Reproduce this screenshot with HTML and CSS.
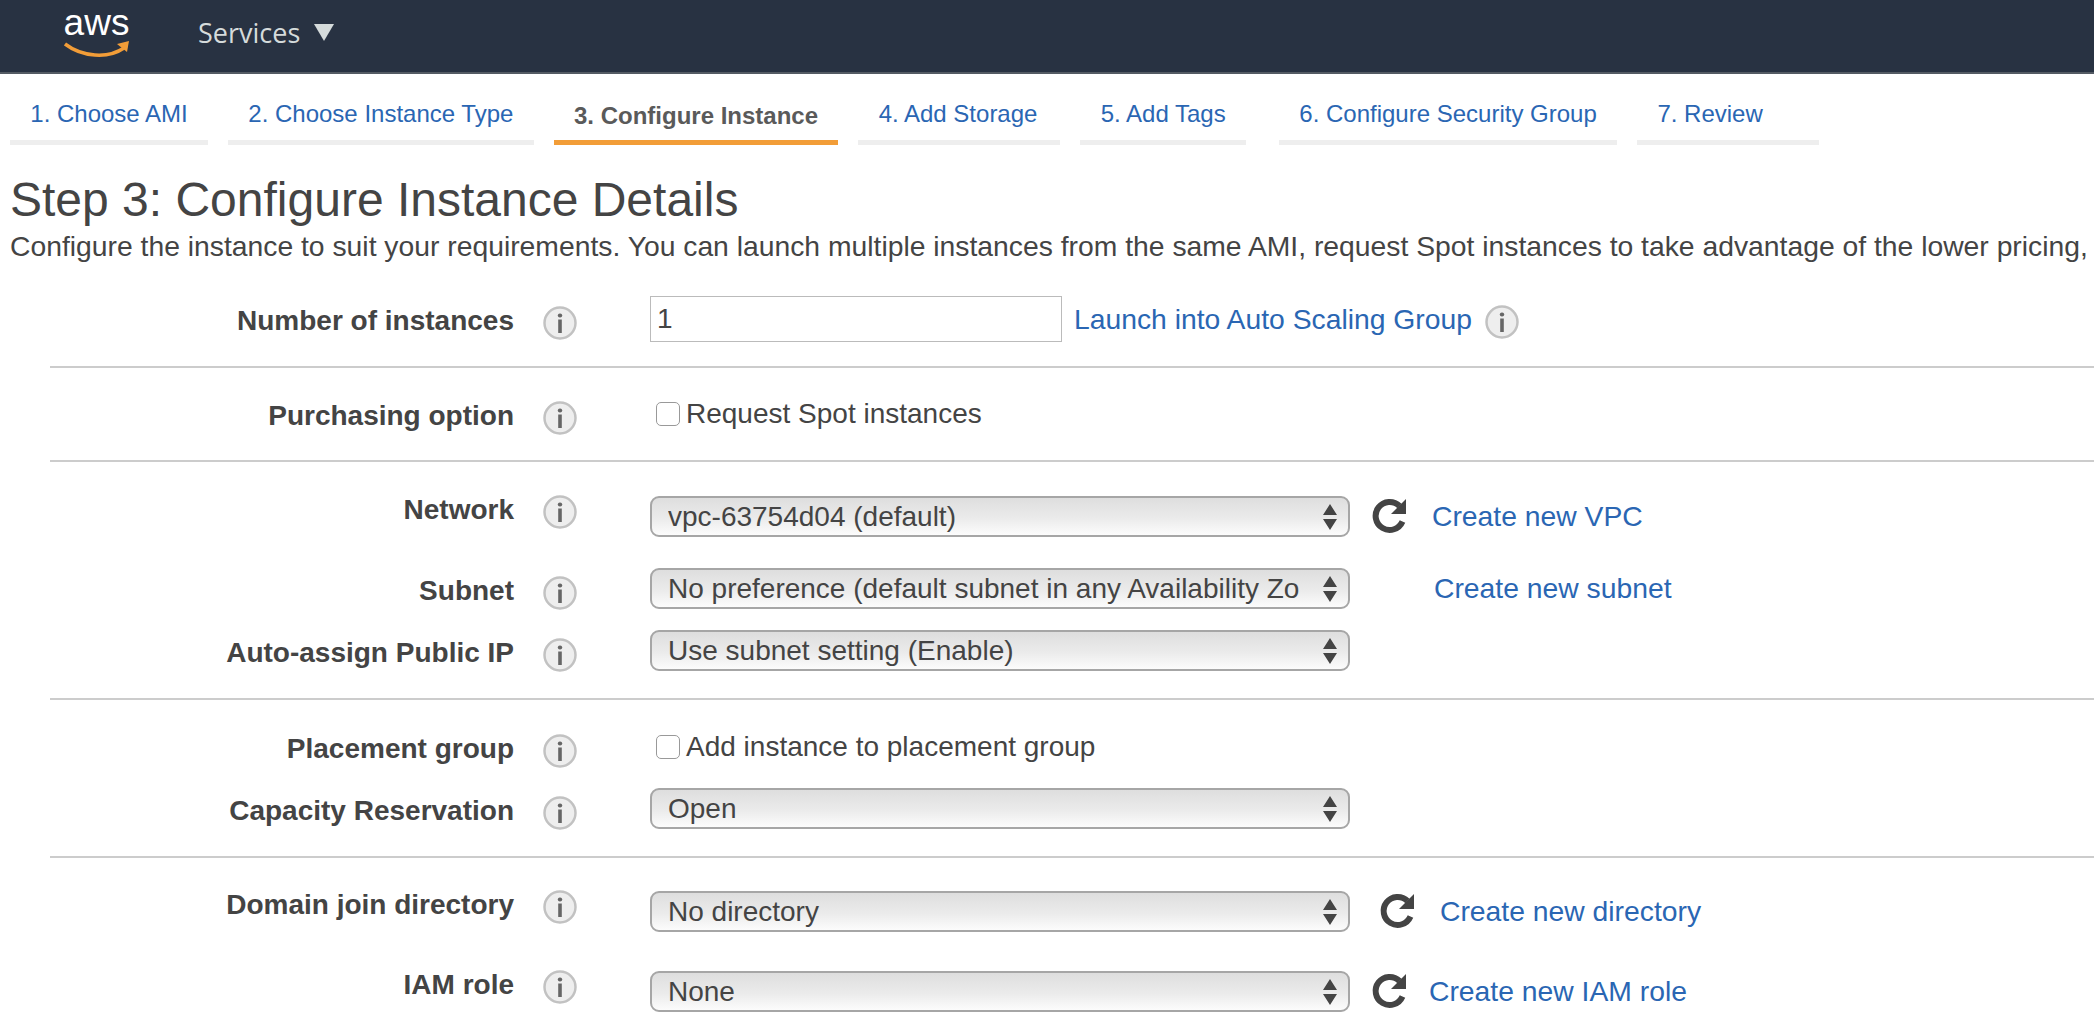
FILE: index.html
```html
<html>
<head>
	<title>Launch instance wizard</title>
	<meta charset="UTF-8">
	<link rel="stylesheet" href="styles.css">
</head>
<body>
	<svg class="defs" width="0" height="0">
		<symbol id="info" viewBox="0 0 36 36">
			<circle cx="18" cy="18" r="15.5" fill="#eeeeee" stroke="#c2c2c2" stroke-width="2.5"/>
			<rect x="15.8" y="8.5" width="4.4" height="4" rx="2" fill="#666"/>
			<rect x="16.2" y="14.5" width="3.6" height="13.5" fill="#666"/>
		</symbol>
		<symbol id="refresh" viewBox="0 0 38 38">
			<path d="M31.5 24.5A14 14 0 1 1 28.5 9" fill="none" stroke="#444" stroke-width="6"/>
			<path d="M35 2V17H20Z" fill="#444"/>
		</symbol>
		<symbol id="arrows" viewBox="0 0 16 28">
			<path d="M8 1L15 12H1ZM1 16H15L8 27Z" fill="#444"/>
		</symbol>
	</svg>

	<header class="topbar">
		<div class="logo">
			<span class="logo-text">aws</span>
			<svg class="smile" viewBox="0 0 66 20" width="66" height="20">
				<path d="M1 4C18 17 44 19 60 8" fill="none" stroke="#f29d38" stroke-width="3.5"/>
				<path d="M53 4L65 1L63 12Z" fill="#f29d38"/>
			</svg>
		</div>
		<span class="services">Services</span>
		<span class="caret"></span>
	</header>

	<nav class="tabs">
		<a class="tab">1. Choose AMI</a>
		<a class="tab">2. Choose Instance Type</a>
		<a class="tab active">3. Configure Instance</a>
		<a class="tab storage">4. Add Storage</a>
		<a class="tab">5. Add Tags</a>
		<a class="tab security">6. Configure Security Group</a>
		<a class="tab review">7. Review</a>
	</nav>

	<h1>Step 3: Configure Instance Details</h1>
	<p class="intro">Configure the instance to suit your requirements. You can launch multiple instances from the same AMI, request Spot instances to take advantage of the lower pricing,</p>

	<form>
		<section class="group first">
			<div class="row">
				<div class="head"><label>Number of instances</label><svg class="info"><use href="#info"/></svg></div>
				<input class="count" type="text" value="1">
				<a class="link launch">Launch into Auto Scaling Group</a>
				<svg class="info after-link"><use href="#info"/></svg>
			</div>
		</section>

		<section class="group second">
			<div class="row tall">
				<div class="head"><label>Purchasing option</label><svg class="info"><use href="#info"/></svg></div>
				<input class="check" type="checkbox"><span class="check-text">Request Spot instances</span>
			</div>
		</section>

		<section class="group third">
			<div class="row">
				<div class="head raised"><label>Network</label><svg class="info"><use href="#info"/></svg></div>
				<div class="select-box"><select><option>vpc-63754d04 (default)</option></select><svg class="arrows"><use href="#arrows"/></svg></div>
				<svg class="refresh"><use href="#refresh"/></svg>
				<a class="link vpc">Create new VPC</a>
			</div>
			<div class="row subnet">
				<div class="head"><label>Subnet</label><svg class="info"><use href="#info"/></svg></div>
				<div class="select-box"><select><option>No preference (default subnet in any Availability Zone)</option></select><svg class="arrows"><use href="#arrows"/></svg></div>
				<a class="link new-subnet">Create new subnet</a>
			</div>
			<div class="row public-ip">
				<div class="head"><label>Auto-assign Public IP</label><svg class="info"><use href="#info"/></svg></div>
				<div class="select-box"><select><option>Use subnet setting (Enable)</option></select><svg class="arrows"><use href="#arrows"/></svg></div>
			</div>
		</section>

		<section class="group fourth">
			<div class="row tall">
				<div class="head"><label>Placement group</label><svg class="info"><use href="#info"/></svg></div>
				<input class="check" type="checkbox"><span class="check-text">Add instance to placement group</span>
			</div>
			<div class="row capacity">
				<div class="head"><label>Capacity Reservation</label><svg class="info"><use href="#info"/></svg></div>
				<div class="select-box"><select><option>Open</option></select><svg class="arrows"><use href="#arrows"/></svg></div>
			</div>
		</section>

		<section class="group last">
			<div class="row">
				<div class="head raised"><label>Domain join directory</label><svg class="info"><use href="#info"/></svg></div>
				<div class="select-box"><select><option>No directory</option></select><svg class="arrows"><use href="#arrows"/></svg></div>
				<svg class="refresh directory"><use href="#refresh"/></svg>
				<a class="link vpc">Create new directory</a>
			</div>
			<div class="row iam">
				<div class="head raised"><label>IAM role</label><svg class="info"><use href="#info"/></svg></div>
				<div class="select-box"><select><option>None</option></select><svg class="arrows"><use href="#arrows"/></svg></div>
				<svg class="refresh"><use href="#refresh"/></svg>
				<a class="link role">Create new IAM role</a>
			</div>
		</section>
	</form>
</body>
</html>
```

FILE: styles.css
```css
*{
	margin: 0;
	padding: 0;
	box-sizing: border-box;
}
html,body{
	height: 100%;
	overflow: hidden;
}
body{
	background: #fff;
	color: #444;
	font-family: "Liberation Sans", Arial, sans-serif;
	font-size: 28px;
}
.defs{
	display: block;
	height: 0;
}

/* top bar */
.topbar{
	display: flex;
	align-items: center;
	height: 74px;
	padding-left: 63px;
	background: #283242;
	border-bottom: 2px solid #545b64;
}
.logo{
	display: flex;
	flex-direction: column;
	align-items: center;
	width: 67px;
	height: 58px;
	margin-right: 68px;
	margin-bottom: 6px;
}
.logo-text{
	color: #fff;
	font-size: 37px;
	line-height: 38px;
}
.smile{
	margin-top: -2px;
}
.services{
	margin-bottom: 8px;
	color: #d5dbdb;
	font-family: "Open Sans", sans-serif;
	font-size: 27px;
}
.caret{
	width: 0;
	height: 0;
	margin: 0 0 8px 14px;
	border-left: 10px solid transparent;
	border-right: 10px solid transparent;
	border-top: 17px solid #d5dbdb;
}

/* wizard tabs */
.tabs{
	display: flex;
	gap: 20px;
	padding: 24px 0 0 10px;
}
.tab{
	display: block;
	padding: 0 20.3px 10px;
	border-bottom: 5px solid #eee;
	color: #2a66b3;
	font-size: 24px;
	line-height: 32px;
}
.active{
	padding-top: 2px;
	padding-bottom: 8px;
	border-bottom-color: #f29d38;
	color: #5a5a5a;
	font-weight: bold;
}
.storage{
	padding-right: 23px;
}
.security{
	margin-left: 13px;
}
.review{
	padding-right: 56px;
}

h1{
	margin: 30px 0 0 10px;
	font-size: 48px;
	font-weight: normal;
	line-height: 50px;
}
.intro{
	margin-left: 10px;
	font-size: 28.3px;
	line-height: 42px;
	white-space: nowrap;
}

/* form */
.group{
	margin-left: 50px;
	border-bottom: 2px solid #ccc;
}
.first{
	padding: 29px 0 24px;
}
.second{
	padding: 23px 0;
}
.third{
	padding: 26px 0 27px;
}
.fourth{
	padding: 24px 0 27px;
}
.last{
	padding-top: 25px;
	border-bottom: none;
}
.row{
	display: flex;
	align-items: center;
	min-height: 41px;
}
.tall{
	min-height: 46px;
}
.subnet{
	margin-top: 24px;
}
.public-ip{
	margin-top: 21px;
}
.capacity{
	margin-top: 18px;
}
.iam{
	margin-top: 24px;
}
.head{
	display: flex;
	align-items: flex-start;
	flex: none;
	width: 600px;
	height: 40px;
}
.raised{
	margin-bottom: 16px;
}
label{
	width: 464px;
	margin-top: 6px;
	font-weight: bold;
	text-align: right;
}
.info{
	flex: none;
	width: 36px;
	height: 36px;
	margin-left: 28px;
	margin-top: 6px;
	filter: blur(0.4px);
}
.after-link{
	margin-left: 12px;
}
.count{
	width: 412px;
	height: 46px;
	padding: 0 6px;
	border: 1px solid #bbb;
	color: #444;
	font-family: inherit;
	font-size: 28px;
}
.check{
	appearance: none;
	flex: none;
	width: 24px;
	height: 24px;
	margin: 0 6px;
	background: #fff;
	border: 1px solid #999;
	border-radius: 5px;
}
.select-box{
	position: relative;
	flex: none;
	width: 700px;
	height: 41px;
}
select{
	appearance: none;
	display: block;
	width: 100%;
	height: 100%;
	padding: 0 48px 0 16px;
	background: linear-gradient(#dedede, #ebebeb 55%, #fcfcfc);
	border: 2px solid #a6a6a6;
	border-radius: 9px;
	color: #444;
	font-family: inherit;
	font-size: 28px;
}
.arrows{
	position: absolute;
	top: 7px;
	right: 11px;
	width: 18px;
	height: 28px;
}
.refresh{
	flex: none;
	width: 38px;
	height: 38px;
	margin: 0 23px 0 21px;
}
.directory{
	margin: 0 23px 0 29px;
}
.link{
	color: #2a66b3;
	font-size: 28.3px;
	white-space: nowrap;
}
.launch{
	margin-left: 12px;
}
.new-subnet{
	margin-left: 84px;
}
.role{
	margin-left: -3px;
}
```
